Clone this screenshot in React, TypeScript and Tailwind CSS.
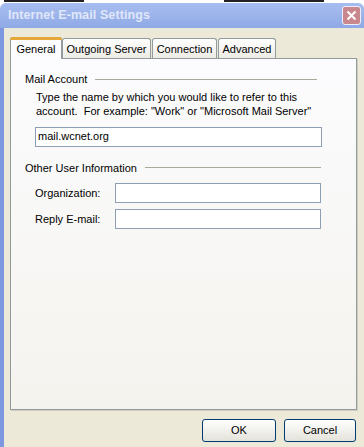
import React from "react";

const font = { fontFamily: "Tahoma, 'Liberation Sans', Arial, sans-serif" };

function Tab({ label, active, w }: { label: string; active?: boolean; w: number }) {
  if (active) {
    return (
      <div className="relative z-10 -mb-px flex items-center justify-center rounded-t-[3px] border border-b-0 border-[#919b9c] bg-[#fcfcfe] pt-[1px] text-[11px] text-black" style={{ marginTop: -2, height: 22, width: w }}>
        <div className="absolute left-[-1px] right-[-1px] top-[-1px] h-[3px] rounded-t-[3px] bg-[#e6a739]" />
        {label}
      </div>
    );
  }
  return (
    <div className="flex h-[20px] items-center justify-center rounded-t-[3px] border border-b-0 border-[#919b9c] bg-gradient-to-b from-[#ffffff] to-[#ecebe5] pt-[1px] text-[11px] text-black" style={{ width: w }}>
      {label}
    </div>
  );
}

function Group({ title, lineW }: { title: string; lineW: number }) {
  return (
    <div className="flex items-center">
      <span className="text-[11px] text-black">{title}</span>
      <div className="ml-[8px] h-px bg-[#aca899]" style={{ width: lineW }} />
    </div>
  );
}

export default function App() {
  return (
    <div className="h-[447px] w-[364px] overflow-hidden bg-white" style={font}>
      <div className="flex h-[3px] items-start">
        <div className="ml-[4px] h-[2px] w-[80px] bg-[#222]" />
        <div className="ml-[140px] h-[2px] w-[100px] bg-[#222]" />
      </div>
      <div className="flex h-[444px] flex-col rounded-t-[6px] bg-[#ece9d8]">
        <div className="flex h-[25px] items-center justify-between rounded-t-[6px] bg-gradient-to-b from-[#a5bdef] via-[#9cb4ea] to-[#8ea9e6] pl-[8px] pr-[3px]">
          <span className="font-bold tracking-[0.1px] text-[#e0e7fa]" style={{ fontFamily: "'Liberation Sans', Arial, sans-serif", fontSize: 12.5 }}>
            Internet E-mail Settings
          </span>
          <div className="flex h-[19px] w-[19px] items-center justify-center rounded-[3px] border border-[#eef] bg-[#c8888e]">
            <svg width="11" height="11" viewBox="0 0 11 11">
              <path d="M1.5 1.5 L9.5 9.5 M9.5 1.5 L1.5 9.5" stroke="#fff" strokeWidth="2" />
            </svg>
          </div>
        </div>
        <div className="flex flex-1">
          <div className="w-[4px] bg-[#7d98e0]" />
          <div className="flex flex-1 flex-col pl-[6px] pr-[7px] pt-[10px]">
            <div className="flex items-end">
              <Tab label="General" active w={52} />
              <Tab label="Outgoing Server" w={89} />
              <div className="w-[1px]" />
              <Tab label="Connection" w={65} />
              <div className="w-[1px]" />
              <Tab label="Advanced" w={58} />
            </div>
            <div className="h-[352px] border border-[#919b9c] bg-gradient-to-b from-[#fcfcfe] to-[#f4f3ee] pl-[14px] pt-[12px] shadow-[1px_1px_0_#d0cec0]">
              <Group title="Mail Account" lineW={222} />
              <div className="mt-[2px] pl-[11px] text-[11px] leading-[14px] text-black">
                <div>Type the name by which you would like to refer to this</div>
                <div>account.&nbsp; For example: "Work" or "Microsoft Mail Server"</div>
              </div>
              <div className="ml-[10px] mt-[9px] flex h-[20px] w-[287px] items-center border border-[#8e9fb5] bg-white pl-[2px] text-[11px] text-black">
                mail.wcnet.org
              </div>
              <div className="mt-[13px]">
                <Group title="Other User Information" lineW={176} />
              </div>
              <div className="mt-[7px] flex items-center pl-[10px]">
                <span className="w-[80px] text-[11px] text-black">Organization:</span>
                <div className="h-[20px] w-[206px] border border-[#8e9fb5] bg-white" />
              </div>
              <div className="mt-[6px] flex items-center pl-[10px]">
                <span className="w-[80px] text-[11px] text-black">Reply E-mail:</span>
                <div className="h-[20px] w-[206px] border border-[#8e9fb5] bg-white" />
              </div>
            </div>
            <div className="mt-[9px] flex justify-end gap-[8px] pr-[1px]">
              <div className="flex h-[23px] w-[74px] items-center justify-center rounded-[3px] border border-[#003c74] bg-gradient-to-b from-white to-[#e3e2da] text-[11px] text-black">
                OK
              </div>
              <div className="flex h-[23px] w-[72px] items-center justify-center rounded-[3px] border border-[#003c74] bg-gradient-to-b from-white to-[#e3e2da] text-[11px] text-black">
                Cancel
              </div>
            </div>
          </div>
        </div>
      </div>
    </div>
  );
}
